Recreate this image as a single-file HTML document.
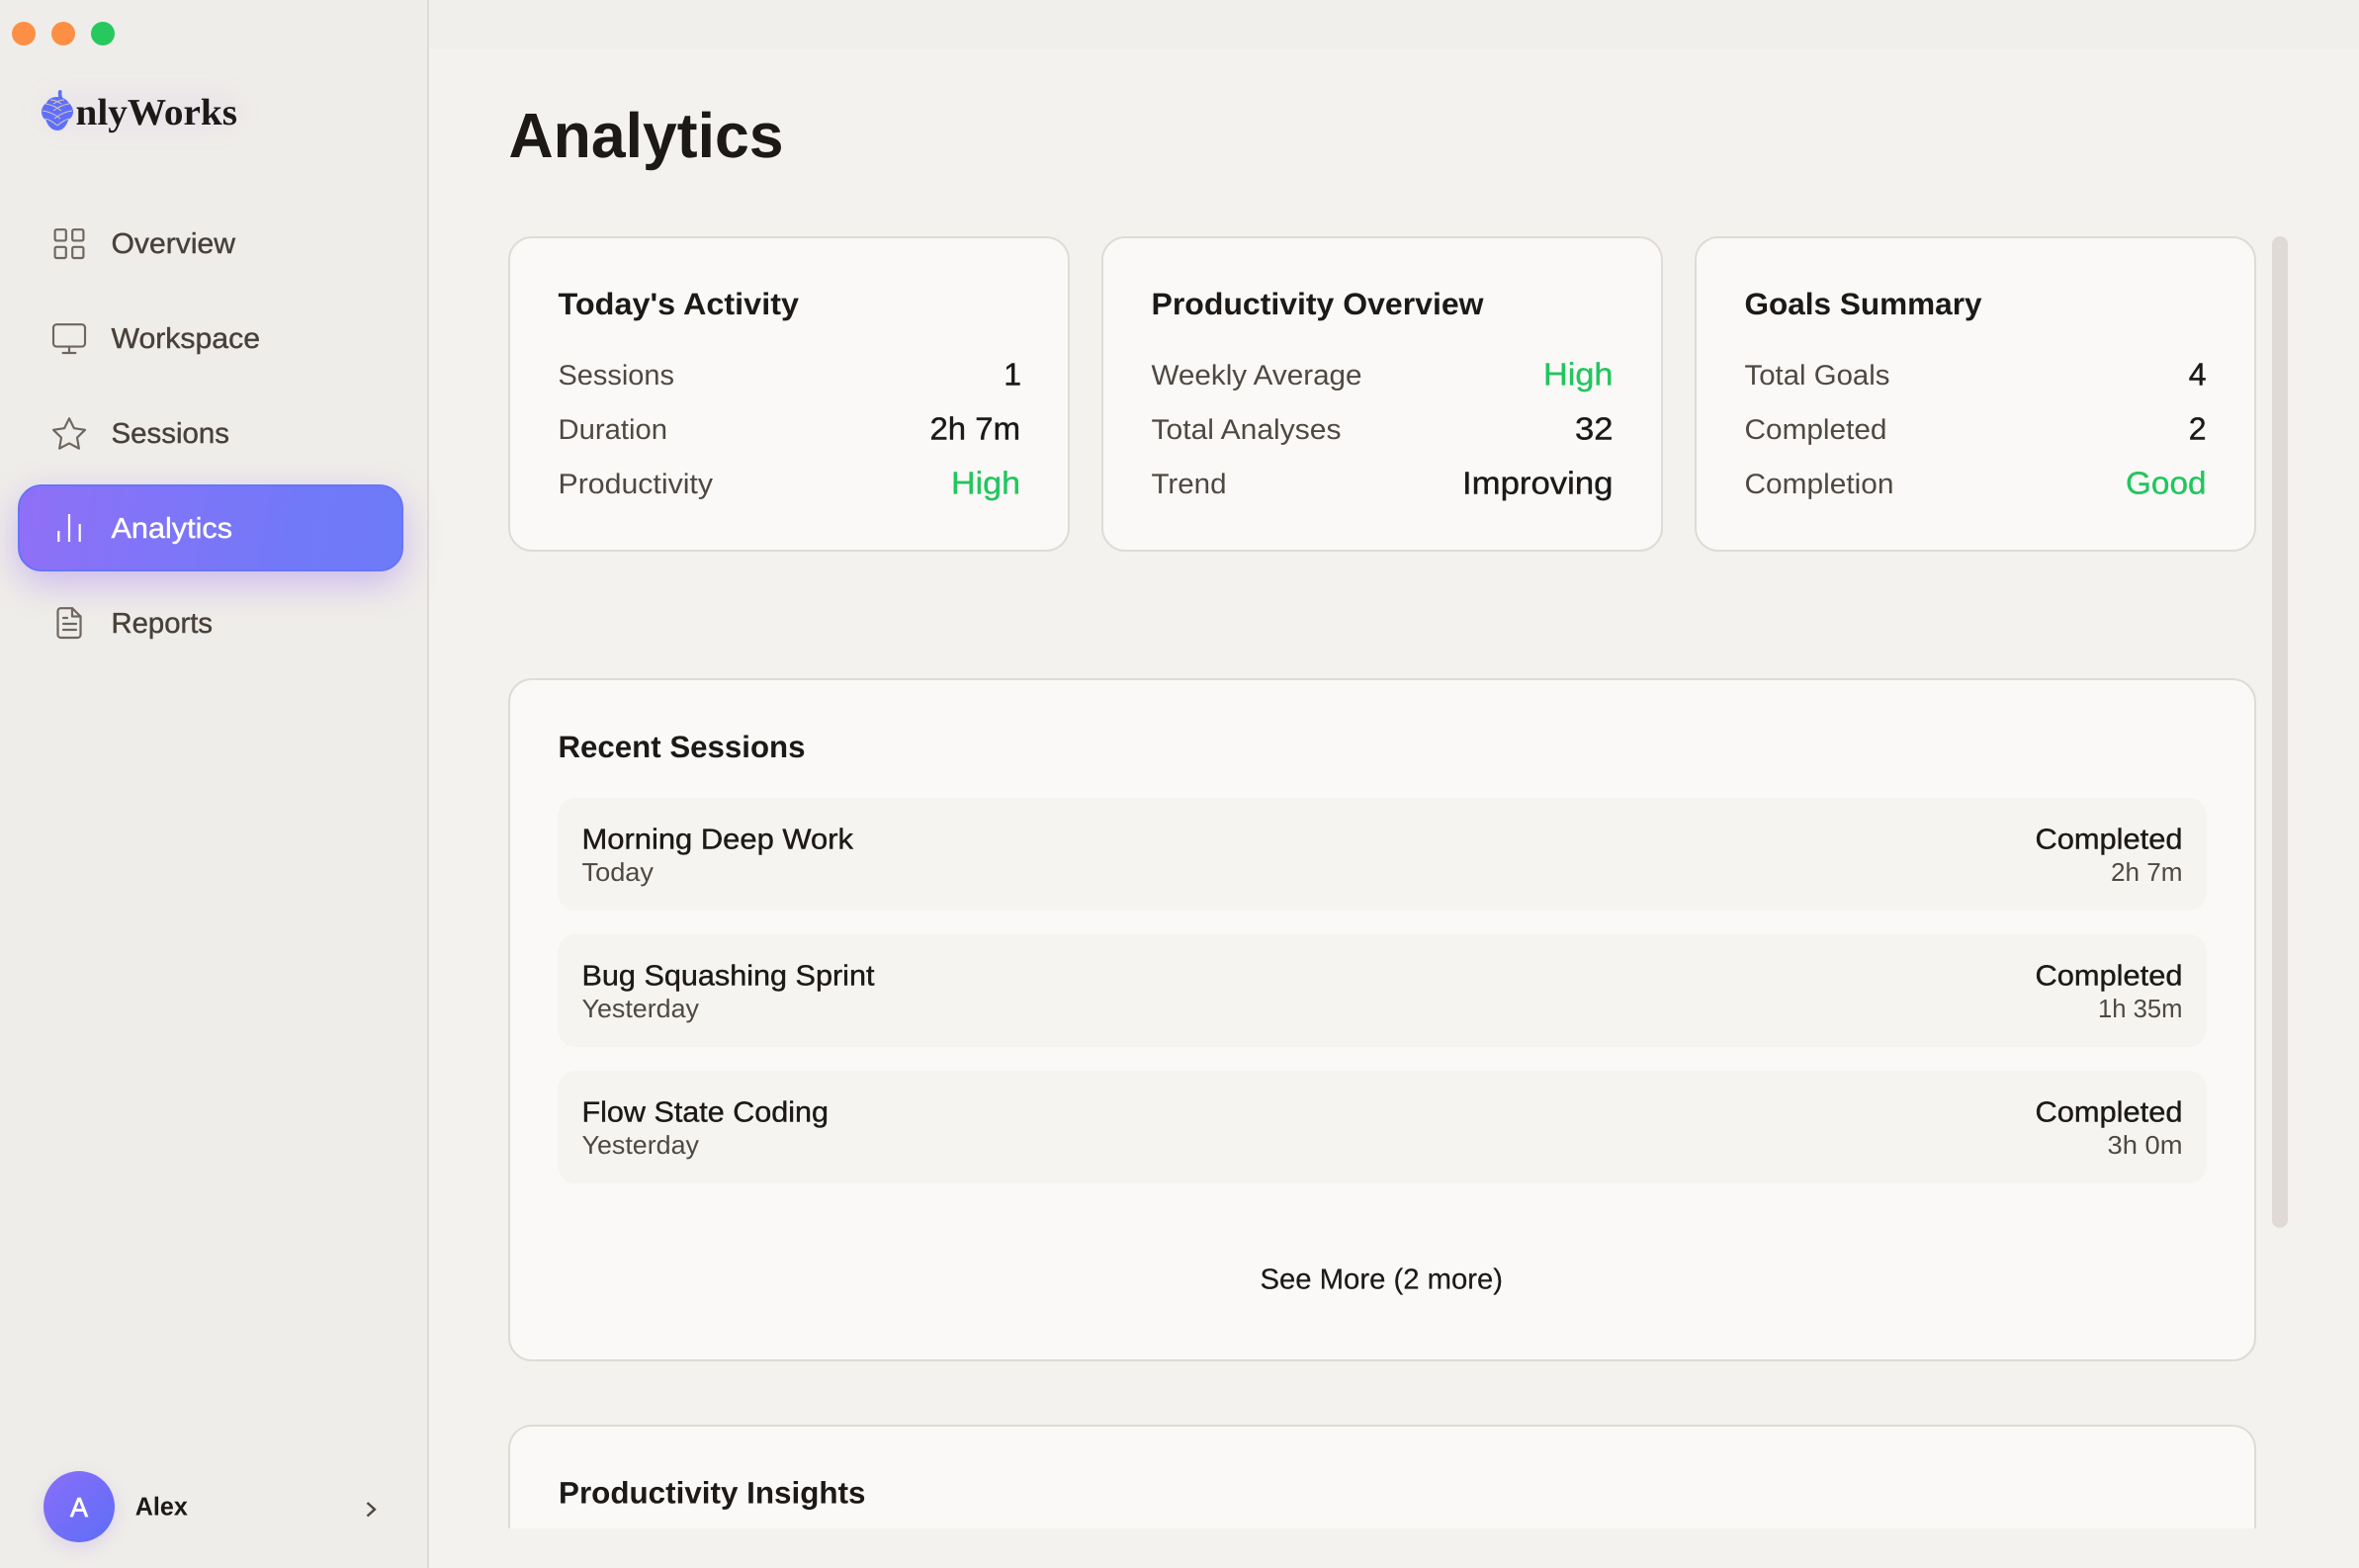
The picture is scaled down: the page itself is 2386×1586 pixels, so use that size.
<!DOCTYPE html>
<html lang="en">
<head>
<meta charset="utf-8">
<title>Analytics</title>
<style>
html,body{margin:0;padding:0;width:2386px;height:1586px;overflow:hidden;background:#f3f2ee;}
.abs{position:absolute;box-sizing:border-box;}
#side{left:0;top:0;width:434px;height:1586px;background:#efede9;border-right:2px solid #e0dbd6;}
#top{left:434px;top:0;width:1952px;height:50px;background:#f0efeb;}
.card{position:absolute;box-sizing:border-box;background:#faf9f7;border:2px solid #e0dbd5;border-radius:24px;}
.row{position:absolute;left:48px;width:1668px;height:114px;background:#f5f4f1;border-radius:18px;}
.dot{position:absolute;width:24px;height:24px;border-radius:50%;top:22px;}
#active{left:18px;top:490px;width:390px;height:88px;border-radius:24px;border:2px solid #6675f8;background:linear-gradient(100deg,#8f70f7,#7279f8 70%,#6e7bf9);box-shadow:0 12px 36px rgba(139,92,246,.36);}
#avatar{left:44px;top:1488px;width:72px;height:72px;border-radius:50%;background:linear-gradient(135deg,#8a6ff8,#5c6df7);box-shadow:0 6px 18px rgba(139,92,246,.18);}
#glow{left:40px;top:92px;width:205px;height:40px;border-radius:20px;background:rgba(139,92,246,.05);filter:blur(12px);}
#bar{left:2298px;top:239px;width:16px;height:1003px;border-radius:8px;background:#dfdad5;}
svg#ov{position:absolute;left:0;top:0;display:block;}
text{font-family:"Liberation Sans",Arial,sans-serif;text-rendering:geometricPrecision;}
.b{fill:#1c1917;font-weight:700;}
.m{fill:#1c1917;stroke:#1c1917;stroke-width:.4;}
.l{fill:#4f4842;}
.n{fill:#48403a;stroke:#48403a;stroke-width:.4;}
.g{fill:#22c55e;stroke:#22c55e;stroke-width:.35;}
.ic{fill:none;stroke:#6e665f;stroke-linecap:round;stroke-linejoin:round;}
</style>
</head>
<body>
<div class="abs" id="side"></div>
<div class="abs" id="top"></div>
<div class="dot" style="left:12px;background:#fd8f45"></div>
<div class="dot" style="left:52px;background:#fd8f45"></div>
<div class="dot" style="left:92px;background:#25c95e"></div>
<div class="abs" id="glow"></div>
<div class="abs" id="active"></div>
<div class="abs" id="avatar"></div>

<div class="card" style="left:514px;top:239px;width:568px;height:319px"></div>
<div class="card" style="left:1114px;top:239px;width:568px;height:319px"></div>
<div class="card" style="left:1714px;top:239px;width:568px;height:319px"></div>
<div class="card" style="left:514px;top:686px;width:1768px;height:691px">
  <div class="row" style="top:119px"></div>
  <div class="row" style="top:257px"></div>
  <div class="row" style="top:395px"></div>
</div>
<div class="card" style="left:514px;top:1441px;width:1768px;height:105px;border-bottom:0;border-radius:24px 24px 0 0"></div>
<div class="abs" id="bar"></div>

<svg id="ov" width="2386" height="1586" viewBox="0 0 2386 1586" xmlns="http://www.w3.org/2000/svg">
  <!-- logo cone -->
  <g transform="translate(42,91)">
    <path fill="none" stroke="#5f6ffb" stroke-width="3.6" stroke-linecap="round" d="M19.500 9C19 6 18 4 18.800 1.800"/>
    <path fill="#5f6ffb" d="M16 7C10 7 6.500 9.500 5 13 2 15 0 18.500 0 22c0 3.500 1.500 6.500 4.500 8.500C6 36 10.500 41 16 41s9.500-5 11-10.500c3-2 5-5 5-8.500 0-3.500-2-7-4.500-9C25.500 9.500 21.500 7 16 7Z"/>
    <path fill="none" stroke="#d8c8b0" stroke-width="1" d="M9 10Q14 10 20 14M23 10Q18 10 12 14M4 14Q12 15 20 21M28 14Q20 15 12 21M1 21Q10 22 19 29M31 21Q22 22 13 29M3.500 29Q9 30 16 36M28.500 29Q23 30 16 36"/>
  </g>
  <text x="76.500" y="126" style="font-family:'Liberation Serif',serif" font-size="38" font-weight="700" fill="#1c1917" textLength="163.500" lengthAdjust="spacingAndGlyphs">nlyWorks</text>

  <!-- nav icons -->
  <g class="ic" transform="translate(50.800,227.400) scale(1.6)" stroke-width="1.35">
    <rect x="3" y="3" width="7" height="7" rx="1"/><rect x="14" y="3" width="7" height="7" rx="1"/><rect x="14" y="14" width="7" height="7" rx="1"/><rect x="3" y="14" width="7" height="7" rx="1"/>
  </g>
  <g class="ic" transform="translate(50.800,323.400) scale(1.6)" stroke-width="1.35">
    <rect x="2" y="3" width="20" height="14" rx="2"/><path d="M8 21h8M12 17v4"/>
  </g>
  <g class="ic" transform="translate(50.800,420) scale(1.6)" stroke-width="1.35">
    <path d="M12 2l3.090 6.260L22 9.270l-5 4.870 1.180 6.880L12 17.770l-6.180 3.250L7 14.140 2 9.270l6.910-1.010L12 2z"/>
  </g>
  <g fill="none" stroke="#fff" stroke-width="2.200">
    <path d="M59.300 548V537M70 548V520M80.700 548V530"/>
  </g>
  <g class="ic" stroke-width="2.200">
    <path d="M73 615.200H61.500a3 3 0 0 0-3 3V642a3 3 0 0 0 3 3h17a3 3 0 0 0 3-3V623.500Z"/>
    <path d="M73 615.200v8.300h8.500M64 625h4M64 631h13M64 637h13"/>
  </g>
  <path fill="none" stroke="#4f4842" stroke-width="2.400" d="M371.500 1520 379 1526.700 371.500 1533.500"/>

  <!-- nav text -->
  <text class="n" x="112.500" y="256" font-size="29" textLength="125.500" lengthAdjust="spacingAndGlyphs">Overview</text>
  <text class="n" x="112.500" y="352" font-size="29" textLength="150.500" lengthAdjust="spacingAndGlyphs">Workspace</text>
  <text class="n" x="112.500" y="448" font-size="29" textLength="119.500" lengthAdjust="spacingAndGlyphs">Sessions</text>
  <text x="112.500" y="544" font-size="29" fill="#fff" stroke="#fff" stroke-width=".4" textLength="122.500" lengthAdjust="spacingAndGlyphs">Analytics</text>
  <text class="n" x="112.500" y="640" font-size="29" textLength="102.500" lengthAdjust="spacingAndGlyphs">Reports</text>

  <!-- profile -->
  <text x="71" y="1534" font-size="27.500" fill="#fff" stroke="#fff" stroke-width=".7" textLength="18" lengthAdjust="spacingAndGlyphs">A</text>
  <text class="b" x="136.800" y="1532.700" font-size="26" textLength="53" lengthAdjust="spacingAndGlyphs">Alex</text>

  <!-- page title -->
  <text x="514.500" y="159" font-size="64" font-weight="700" fill="#1c1917" textLength="278" lengthAdjust="spacingAndGlyphs">Analytics</text>

  <!-- card 1 -->
  <text class="b" x="564.500" y="318" font-size="31" textLength="243.500" lengthAdjust="spacingAndGlyphs">Today's Activity</text>
  <text class="l" x="564.500" y="389" font-size="28.500" textLength="117.500" lengthAdjust="spacingAndGlyphs">Sessions</text>
  <text class="l" x="564.500" y="444" font-size="28.500" textLength="110.500" lengthAdjust="spacingAndGlyphs">Duration</text>
  <text class="l" x="564.500" y="499" font-size="28.500" textLength="156.500" lengthAdjust="spacingAndGlyphs">Productivity</text>
  <text class="m" x="1033" y="389.500" font-size="32" text-anchor="end">1</text>
  <text class="m" x="940.500" y="444.500" font-size="32" textLength="91.500" lengthAdjust="spacingAndGlyphs">2h 7m</text>
  <text class="g" x="962" y="499.500" font-size="32" textLength="70" lengthAdjust="spacingAndGlyphs">High</text>

  <!-- card 2 -->
  <text class="b" x="1164.500" y="318" font-size="31" textLength="336" lengthAdjust="spacingAndGlyphs">Productivity Overview</text>
  <text class="l" x="1164.500" y="389" font-size="28.500" textLength="213" lengthAdjust="spacingAndGlyphs">Weekly Average</text>
  <text class="l" x="1164.500" y="444" font-size="28.500" textLength="192" lengthAdjust="spacingAndGlyphs">Total Analyses</text>
  <text class="l" x="1164.500" y="499" font-size="28.500" textLength="76" lengthAdjust="spacingAndGlyphs">Trend</text>
  <text class="g" x="1561" y="389.500" font-size="32" textLength="70.500" lengthAdjust="spacingAndGlyphs">High</text>
  <text class="m" x="1593" y="444.500" font-size="32" textLength="38.500" lengthAdjust="spacingAndGlyphs">32</text>
  <text class="m" x="1479" y="499.500" font-size="32" textLength="152.500" lengthAdjust="spacingAndGlyphs">Improving</text>

  <!-- card 3 -->
  <text class="b" x="1764.500" y="318" font-size="31" textLength="240" lengthAdjust="spacingAndGlyphs">Goals Summary</text>
  <text class="l" x="1764.500" y="389" font-size="28.500" textLength="147" lengthAdjust="spacingAndGlyphs">Total Goals</text>
  <text class="l" x="1764.500" y="444" font-size="28.500" textLength="144" lengthAdjust="spacingAndGlyphs">Completed</text>
  <text class="l" x="1764.500" y="499" font-size="28.500" textLength="151" lengthAdjust="spacingAndGlyphs">Completion</text>
  <text class="m" x="2231.500" y="389.500" font-size="32" text-anchor="end">4</text>
  <text class="m" x="2231.500" y="444.500" font-size="32" text-anchor="end">2</text>
  <text class="g" x="2150" y="499.500" font-size="32" textLength="81.500" lengthAdjust="spacingAndGlyphs">Good</text>

  <!-- recent sessions -->
  <text class="b" x="564.500" y="766" font-size="31" textLength="250" lengthAdjust="spacingAndGlyphs">Recent Sessions</text>

  <text class="m" x="588.500" y="858.500" font-size="29" textLength="274.500" lengthAdjust="spacingAndGlyphs">Morning Deep Work</text>
  <text class="l" x="588.500" y="891" font-size="26" textLength="72.500" lengthAdjust="spacingAndGlyphs">Today</text>
  <text class="m" x="2058.500" y="858.500" font-size="29" textLength="149" lengthAdjust="spacingAndGlyphs">Completed</text>
  <text class="l" x="2135" y="891" font-size="26" textLength="72.500" lengthAdjust="spacingAndGlyphs">2h 7m</text>

  <text class="m" x="588.500" y="996.500" font-size="29" textLength="296" lengthAdjust="spacingAndGlyphs">Bug Squashing Sprint</text>
  <text class="l" x="588.500" y="1029" font-size="26" textLength="118.500" lengthAdjust="spacingAndGlyphs">Yesterday</text>
  <text class="m" x="2058.500" y="996.500" font-size="29" textLength="149" lengthAdjust="spacingAndGlyphs">Completed</text>
  <text class="l" x="2122" y="1029" font-size="26" textLength="85.500" lengthAdjust="spacingAndGlyphs">1h 35m</text>

  <text class="m" x="588.500" y="1134.500" font-size="29" textLength="249.500" lengthAdjust="spacingAndGlyphs">Flow State Coding</text>
  <text class="l" x="588.500" y="1167" font-size="26" textLength="118.500" lengthAdjust="spacingAndGlyphs">Yesterday</text>
  <text class="m" x="2058.500" y="1134.500" font-size="29" textLength="149" lengthAdjust="spacingAndGlyphs">Completed</text>
  <text class="l" x="2131.500" y="1167" font-size="26" textLength="76" lengthAdjust="spacingAndGlyphs">3h 0m</text>

  <text x="1274.500" y="1303.500" font-size="29" fill="#1c1917" stroke="#1c1917" stroke-width=".2" textLength="245.500" lengthAdjust="spacingAndGlyphs">See More (2 more)</text>

  <text class="b" x="565" y="1520.700" font-size="31" textLength="310.500" lengthAdjust="spacingAndGlyphs">Productivity Insights</text>
</svg>
</body>
</html>
